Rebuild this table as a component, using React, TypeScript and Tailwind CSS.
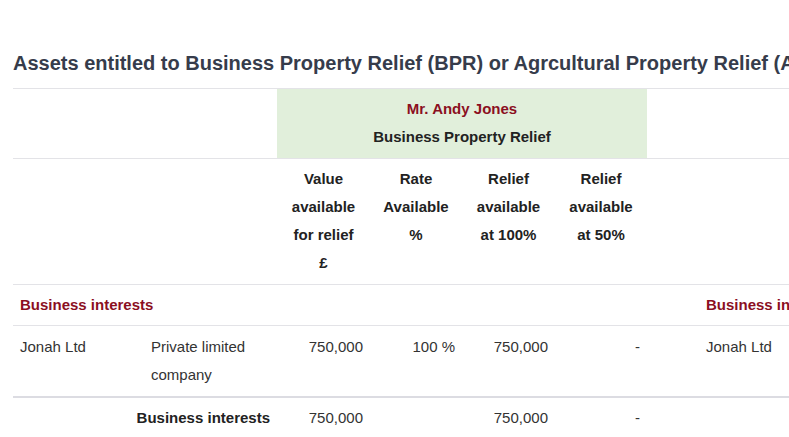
import React from 'react'

const red = 'text-[#8b0f1f]'

function GroupCols() {
  return (
    <>
      <col className="w-[131px]" />
      <col className="w-[133px]" />
      <col className="w-[93px]" />
      <col className="w-[92px]" />
      <col className="w-[93px]" />
      <col className="w-[92px]" />
    </>
  )
}

function HeadCells() {
  return (
    <>
      <th className="px-[7px] pt-[6px] pb-[7px] text-center font-bold">
        Value
        <br />
        available
        <br />
        for relief
        <br />£
      </th>
      <th className="px-[7px] pt-[6px] pb-[7px] text-center font-bold">
        Rate
        <br />
        Available
        <br />%
      </th>
      <th className="px-[7px] pt-[6px] pb-[7px] text-center font-bold">
        Relief
        <br />
        available
        <br />
        at 100%
      </th>
      <th className="px-[7px] pt-[6px] pb-[7px] text-center font-bold">
        Relief
        <br />
        available
        <br />
        at 50%
      </th>
    </>
  )
}

function DataCells() {
  return (
    <>
      <td className="px-[7px] pt-[7px] pb-[7px]">Jonah Ltd</td>
      <td className="px-[7px] pt-[7px] pb-[7px]">
        Private limited
        <br />
        company
      </td>
      <td className="px-[7px] pt-[7px] pb-[7px] text-right">750,000</td>
      <td className="px-[7px] pt-[7px] pb-[7px] text-right">100 %</td>
      <td className="px-[7px] pt-[7px] pb-[7px] text-right">750,000</td>
      <td className="px-[7px] pt-[7px] pb-[7px] text-right">-</td>
    </>
  )
}

function TotalCells() {
  return (
    <>
      <td className="px-[7px] pt-[6px] pb-[6px]" />
      <td className="px-[7px] pt-[6px] pb-[6px] font-bold text-[#222]">
        <div className="flex justify-end whitespace-nowrap">Business interests</div>
      </td>
      <td className="px-[7px] pt-[6px] pb-[6px] text-right">750,000</td>
      <td className="px-[7px] pt-[6px] pb-[6px] text-right" />
      <td className="px-[7px] pt-[6px] pb-[6px] text-right">750,000</td>
      <td className="px-[7px] pt-[6px] pb-[6px] text-right">-</td>
    </>
  )
}

export default function App() {
  return (
    <div className="w-[789px] h-[437px] overflow-hidden bg-white font-['Liberation_Sans',Arial,sans-serif] text-[15px] leading-[28px] text-[#333]">
      <div className="pl-[13px] pt-[49px]">
        <h2 className="whitespace-nowrap text-[20px] leading-[28px] font-bold text-[#363c4b]">
          Assets entitled to Business Property Relief (BPR) or Agrcultural Property Relief (APR)
        </h2>
        <table className="mt-[11px] table-fixed border-collapse w-[1320px]">
          <colgroup>
            <GroupCols />
            <col className="w-[52px]" />
            <GroupCols />
          </colgroup>
          <thead className="text-[#222]">
            <tr className="border-t border-[#e3e3e7]">
              <th colSpan={2} />
              <th colSpan={4} className="bg-[#e1efdb] px-[7px] pt-[6px] pb-[7px] text-center font-bold">
                <div className={red}>Mr. Andy Jones</div>
                <div>Business Property Relief</div>
              </th>
              <th />
              <th colSpan={2} />
              <th colSpan={4} className="bg-[#e1efdb] px-[7px] pt-[6px] pb-[7px] text-center font-bold">
                <div className={red}>Mrs. Jane Jones</div>
                <div>Business Property Relief</div>
              </th>
            </tr>
            <tr className="border-t border-[#e3e3e7] align-top">
              <th colSpan={2} />
              <HeadCells />
              <th />
              <th colSpan={2} />
              <HeadCells />
            </tr>
          </thead>
          <tbody className="align-top">
            <tr className="border-t border-[#e3e3e7]">
              <td colSpan={6} className={`px-[7px] pt-[6px] pb-[6px] font-bold ${red}`}>
                Business interests
              </td>
              <td />
              <td colSpan={6} className={`px-[7px] pt-[6px] pb-[6px] font-bold ${red}`}>
                Business interests
              </td>
            </tr>
            <tr className="border-t border-[#e3e3e7]">
              <DataCells />
              <td />
              <DataCells />
            </tr>
            <tr className="border-t-2 border-[#dcdce2]">
              <TotalCells />
              <td />
              <TotalCells />
            </tr>
          </tbody>
        </table>
      </div>
    </div>
  )
}
